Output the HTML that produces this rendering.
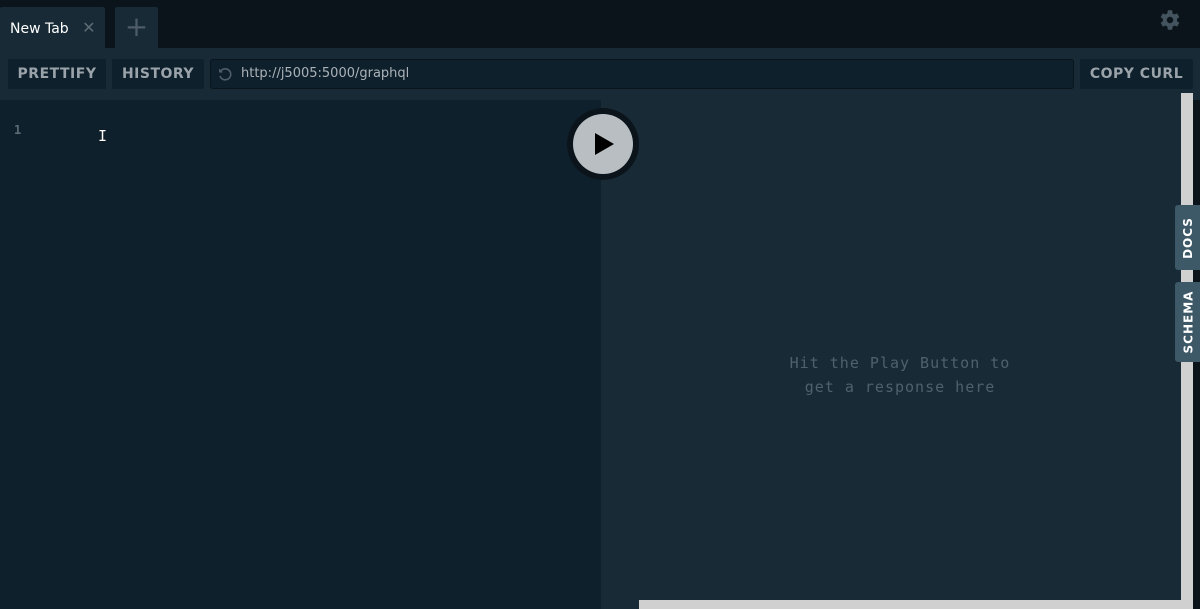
<!DOCTYPE html>
<html><head><style>
body{margin:0;width:1200px;height:609px;overflow:hidden;background:#0b141a;font-family:"DejaVu Sans","Liberation Sans",sans-serif;position:relative}
div{position:absolute;box-sizing:border-box}
.btn{background:#0f202d;color:#9aa3a9;font-weight:bold;font-size:14px;letter-spacing:.5px;border-radius:2px;height:30px;line-height:30px;text-align:center;top:59px}
.side{background:#3d5866;color:#fff;font-weight:bold;font-size:12px;letter-spacing:1px;border-radius:3px 0 0 3px;width:26px;left:1175px;display:flex;align-items:center;justify-content:center}
.side span{transform:rotate(-90deg);white-space:nowrap}
</style></head><body>
<div style="left:0;top:7px;width:105px;height:41px;background:#172a35;border-radius:2px 2px 0 0;color:#fff;font-size:14px;padding:11px 0 0 10px">New Tab <span style="color:#5d6b74;margin-left:9px;font-size:16px">✕</span></div>
<div style="left:115px;top:7px;width:43px;height:41px;background:#172a35;border-radius:2px 2px 0 0;color:#4d5c66;font-size:28px;text-align:center;line-height:40px">+</div>
<svg style="position:absolute;left:1157px;top:7px" width="26" height="26" viewBox="0 0 24 24"><path fill="#44545e" d="M19.4 13a7.5 7.5 0 000-2l2.1-1.6-2-3.5-2.5 1a7.3 7.3 0 00-1.7-1L15 3h-4l-.4 2.9a7.3 7.3 0 00-1.7 1l-2.5-1-2 3.5L6.5 11a7.5 7.5 0 000 2l-2.1 1.6 2 3.5 2.5-1c.5.4 1.1.8 1.7 1L11 21h4l.4-2.9c.6-.2 1.2-.6 1.7-1l2.5 1 2-3.5zM13 15a3 3 0 110-6 3 3 0 010 6z" transform="translate(-1 0)"/></svg>
<div style="left:0;top:48px;width:1200px;height:52px;background:#172a35"></div>
<div class="btn" style="left:8px;width:98px">PRETTIFY</div>
<div class="btn" style="left:112px;width:92px">HISTORY</div>
<div style="left:210px;top:59px;width:864px;height:30px;background:#0f202d;border:1px solid #09141b;border-radius:3px;color:#aab2b7;font-size:13px;line-height:28px;padding-left:30px">http://j5005:5000/graphql</div>
<svg style="position:absolute;left:217px;top:66px" width="16" height="16" viewBox="0 0 16 16"><path d="M3.5 5.5A5.5 5.5 0 1 1 3 10" fill="none" stroke="#4f5e67" stroke-width="1.6"/><path d="M2 2.5v4h4z" fill="#4f5e67"/></svg>
<div class="btn" style="left:1080px;width:113px">COPY CURL</div>
<div style="left:0;top:100px;width:601px;height:509px;background:#0f202d"></div>
<div style="left:14px;top:123px;color:#5d6b74;font-size:12px;font-weight:bold;font-family:'DejaVu Sans Mono',monospace">1</div>
<div style="left:98px;top:127px;color:#fff;font-size:15px;font-family:'DejaVu Sans Mono',monospace;text-shadow:0 0 1px #000">I</div>
<div style="left:601px;top:93px;width:580px;height:516px;background:#172a35"></div>
<div style="left:567px;top:108px;width:72px;height:72px;border-radius:50%;background:#0b141a"></div>
<div style="left:573px;top:114px;width:60px;height:60px;border-radius:50%;background:#b8bec2"></div>
<svg style="position:absolute;left:595px;top:133px" width="20" height="22"><path d="M0 0L19 11L0 22z" fill="#000"/></svg>
<div style="left:698px;top:351px;width:404px;text-align:center;color:#4f616b;font-family:'DejaVu Sans Mono','Liberation Mono',monospace;font-size:15px;line-height:24px;letter-spacing:1px">Hit the Play Button to<br>get a response here</div>
<div style="left:1181px;top:93px;width:12px;height:516px;background:#d0d0d0"></div>
<div style="left:639px;top:600px;width:542px;height:9px;background:#d0d0d0"></div>
<div class="side" style="top:205px;height:65px"><span>DOCS</span></div>
<div class="side" style="top:282px;height:80px"><span>SCHEMA</span></div>
</body></html>
